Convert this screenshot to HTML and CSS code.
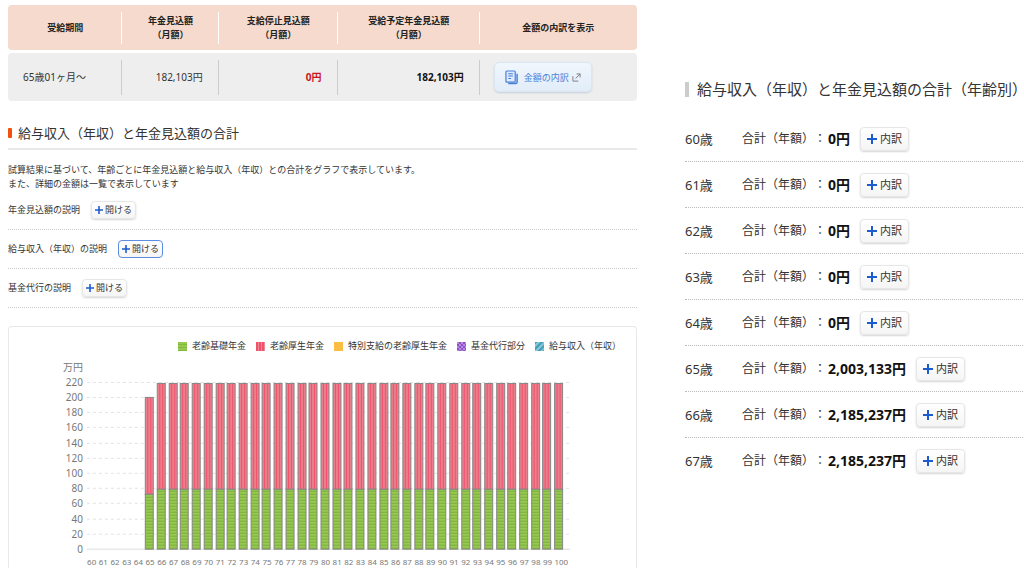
FILE: index.html
```
<!DOCTYPE html>
<html lang="ja">
<head>
<meta charset="utf-8">
<meta name="viewport" content="width=device-width, initial-scale=1">
<title>年金見込額</title>
<link rel="stylesheet" href="styles.css">
</head>
<body>
<svg class="defs" aria-hidden="true">
  <symbol id="plus" viewBox="0 0 10 10"><path d="M5 0V10M0 5H10" stroke="#1d5bd0" stroke-width="2" fill="none"/></symbol>
</svg>
<main class="page">
  <div class="main-column">
    <table class="summary">
      <colgroup><col class="col-period"><col class="col-amount"><col class="col-stop"><col class="col-plan"><col class="col-detail"></colgroup>
      <thead>
        <tr><th scope="col">受給期間</th><th scope="col">年金見込額<br>（月額）</th><th scope="col">支給停止見込額<br>（月額）</th><th scope="col">受給予定年金見込額<br>（月額）</th><th scope="col">金額の内訳を表示</th></tr>
      </thead>
      <tbody>
        <tr>
          <td class="period">65歳01ヶ月～</td><td>182,103円</td><td class="stopped">0円</td><td class="planned">182,103円</td>
          <td class="detail">
            <button type="button" class="detail-button">
              <svg class="doc-icon" viewBox="0 0 14 16" fill="none" stroke="#4a7fd8"><path d="M3.5 14.5H11.5Q13 14.5 13 13V4" stroke-width="1.6"/><rect x="1" y="1" width="10" height="12" rx="1" fill="#dfeafa" stroke-width="1.3"/><path d="M3.5 4H8.5M3.5 6.5H8.5M3.5 9H6.5" stroke-width="1.1"/></svg>
              <span>金額の内訳</span>
              <svg class="open-icon" viewBox="0 0 10 10" fill="none" stroke="#777"><path d="M1 3.5V9H7M4 6L9 1M5 1H9V5"/></svg>
            </button>
          </td>
        </tr>
      </tbody>
    </table>

    <h2 class="section-title">給与収入（年収）と年金見込額の合計</h2>
    <p class="lead">試算結果に基づいて、年齢ごとに年金見込額と給与収入（年収）との合計をグラフで表示しています。<br>また、詳細の金額は一覧で表示しています</p>

    <div class="notes">
      <div class="note"><span id="note1">年金見込額の説明</span><button type="button" class="button small" aria-describedby="note1"><svg><use href="#plus"/></svg>開ける</button></div>
      <div class="note"><span id="note2">給与収入（年収）の説明</span><button type="button" class="button small focused" aria-describedby="note2"><svg><use href="#plus"/></svg>開ける</button></div>
      <div class="note"><span id="note3">基金代行の説明</span><button type="button" class="button small" aria-describedby="note3"><svg><use href="#plus"/></svg>開ける</button></div>
    </div>

    <section class="chart-card">
      <ul class="legend">
        <li><i class="swatch basic"></i>老齢基礎年金</li>
        <li><i class="swatch welfare"></i>老齢厚生年金</li>
        <li><i class="swatch special"></i>特別支給の老齢厚生年金</li>
        <li><i class="swatch fund"></i>基金代行部分</li>
        <li><i class="swatch salary"></i>給与収入（年収）</li>
      </ul>
      <svg id="chart" class="chart" viewBox="0 0 628 212" role="img" aria-label="年齢ごとの合計">
        <defs>
          <pattern id="pink" width="1" height="1" patternContentUnits="userSpaceOnUse"><rect width="9" height="200" fill="#e97f8c"/><path d="M2.5 0V200M5.5 0V200" stroke="#f4506b"/></pattern>
          <pattern id="green" width="8" height="3" patternUnits="userSpaceOnUse"><rect width="8" height="3" fill="#97c850"/><rect width="8" height="1" fill="#7cae3c"/></pattern>
        </defs>
      </svg>
    </section>
  </div>

  <section class="age-column">
    <h2 class="age-title"><span>給与収入（年収）と年金見込額の合計（年齢別<span class="closing">）</span></span></h2>
    <ul class="ages">
      <li><span class="age">60歳</span><span class="total">合計（年額）：</span><strong>0円</strong><button type="button" class="button"><svg><use href="#plus"/></svg>内訳</button></li>
      <li><span class="age">61歳</span><span class="total">合計（年額）：</span><strong>0円</strong><button type="button" class="button"><svg><use href="#plus"/></svg>内訳</button></li>
      <li><span class="age">62歳</span><span class="total">合計（年額）：</span><strong>0円</strong><button type="button" class="button"><svg><use href="#plus"/></svg>内訳</button></li>
      <li><span class="age">63歳</span><span class="total">合計（年額）：</span><strong>0円</strong><button type="button" class="button"><svg><use href="#plus"/></svg>内訳</button></li>
      <li><span class="age">64歳</span><span class="total">合計（年額）：</span><strong>0円</strong><button type="button" class="button"><svg><use href="#plus"/></svg>内訳</button></li>
      <li><span class="age">65歳</span><span class="total">合計（年額）：</span><strong>2,003,133円</strong><button type="button" class="button"><svg><use href="#plus"/></svg>内訳</button></li>
      <li><span class="age">66歳</span><span class="total">合計（年額）：</span><strong>2,185,237円</strong><button type="button" class="button"><svg><use href="#plus"/></svg>内訳</button></li>
      <li><span class="age">67歳</span><span class="total">合計（年額）：</span><strong>2,185,237円</strong><button type="button" class="button"><svg><use href="#plus"/></svg>内訳</button></li>
    </ul>
  </section>
</main>
<script src="chart.js"></script>
</body>
</html>
```
FILE: styles.css
```
* { box-sizing: border-box; }
body {
  margin: 0;
  background: #fff;
  color: #333;
  font-family: "Noto Sans", "Noto Sans CJK JP", sans-serif;
  font-size: 9px;
  line-height: 14px;
}
h2, p, ul { margin: 0; padding: 0; }
ul { list-style: none; }
button { font-family: inherit; cursor: pointer; }
.defs { display: none; }

.page {
  display: grid;
  grid-template-columns: minmax(0, 629fr) minmax(0, 338fr);
  gap: 48px;
  align-items: start;
  padding: 2px 1px 0 8px;
}

/* Summary table */
.summary {
  width: 100%;
  table-layout: fixed;
  border-collapse: separate;
  border-spacing: 0 3px;
}
.col-period { width: 18.2%; }
.col-amount { width: 15.3%; }
.col-stop { width: 18.9%; }
.col-plan { width: 22.6%; }
.col-detail { width: 25%; }
.summary th, .summary td {
  padding: 0;
  background-repeat: no-repeat;
  background-position: right center;
}
.summary th {
  height: 45px;
  color: #222;
  font-weight: 700;
  background-color: #f5dacd;
  background-image: linear-gradient(#fff, #fff);
  background-size: 1px 32px;
}
.summary td {
  height: 48px;
  padding-right: 16px;
  font-size: 10px;
  text-align: right;
  background-color: #eee;
  background-image: linear-gradient(#ccc, #ccc);
  background-size: 1px 35px;
}
.summary th:last-child, .summary td:last-child { background-image: none; }
.summary th:first-child, .summary td:first-child { border-radius: 4px 0 0 4px; }
.summary th:last-child, .summary td:last-child { border-radius: 0 4px 4px 0; }
.summary .period { padding-left: 15px; text-align: left; }
.summary .stopped { color: #c9141e; font-weight: 700; }
.summary .planned { color: #111; font-weight: 700; }
.summary .detail { padding-left: 14px; text-align: left; }
.detail-button {
  display: inline-flex;
  align-items: center;
  height: 30px;
  padding: 0 10px;
  border: 1px solid #dce6f1;
  border-radius: 5px;
  background: linear-gradient(#f0f6fd, #e2edf9);
  box-shadow: 0 1px 2px #c5ced8;
  color: #4a7fd8;
  font-size: 9px;
  vertical-align: middle;
}
.doc-icon { width: 13px; height: 15px; margin-right: 6px; }
.open-icon { width: 9px; height: 9px; margin-left: 3px; }

/* Left column */
.section-title {
  display: flex;
  align-items: center;
  gap: 6px;
  margin-top: 18px;
  padding-bottom: 4px;
  border-bottom: 2px solid #e9e9e9;
  font-size: 13px;
  font-weight: 400;
  line-height: 22px;
}
.section-title::before {
  content: "";
  flex: none;
  width: 4px;
  height: 10px;
  border-radius: 1px;
  background: #f1500f;
}
.lead { margin: 13px 0 0; }
.note {
  display: flex;
  align-items: center;
  gap: 11px;
  height: 39px;
  border-bottom: 1px dotted #ccc;
}
.button {
  display: inline-flex;
  align-items: center;
  justify-content: center;
  gap: 3px;
  height: 24px;
  padding: 0 6px;
  border: 1px solid #e6e6e6;
  border-radius: 4px;
  background: linear-gradient(#fff, #f5f5f5);
  box-shadow: 0 1px 2px #d4d4d4;
  color: #333;
  font-size: 11px;
  line-height: 16px;
}
.button svg { width: 10px; height: 10px; }
.button.small { height: 18px; padding: 0 3px; gap: 2px; font-size: 9px; }
.button.small svg { width: 8px; height: 8px; }
.button.focused { border-color: #5b8de0; box-shadow: none; }

/* Chart */
.chart-card {
  margin-top: 18px;
  border: 1px solid #e8e8e8;
  border-bottom: 0;
  border-radius: 4px 4px 0 0;
}
.legend {
  display: flex;
  flex-wrap: wrap;
  justify-content: flex-end;
  gap: 10px;
  padding: 12px 15px 3px;
}
.legend li { display: flex; align-items: center; gap: 5px; }
.swatch { width: 9px; height: 9px; }
.basic { background: repeating-linear-gradient(#97c850 0 2px, #83b83f 2px 3px); }
.welfare { background: repeating-linear-gradient(90deg, #f4506b 0 2px, #e98b95 2px 3px); }
.special { background: #fcbd45; }
.fund { background: repeating-conic-gradient(#8f4fcb 0 25%, #b88ae2 0 50%) 0 0 / 4px 4px; }
.salary { background: repeating-linear-gradient(135deg, #45a2bd 0 2px, #86c4d4 2px 4px); }
.chart { display: block; width: 100%; }
.chart text { fill: #777; font-size: 10px; }
.chart .age-label { font-size: 8px; text-anchor: middle; }
.chart .value-label { text-anchor: end; }
.grid-line { stroke: #e2e2e2; stroke-dasharray: 3 3; }
.base-line { stroke: #ddd; }
.bar { stroke: #858585; }

/* Right column */
.age-column { padding-top: 75px; }
.age-title {
  display: flex;
  align-items: center;
  gap: 8px;
  font-size: 15px;
  font-weight: 400;
  line-height: 24px;
  white-space: nowrap;
}
.age-title::before { content: ""; flex: none; width: 4px; height: 15px; background: #ccc; }
.closing { font-feature-settings: "halt"; }
.ages { margin-top: 15px; }
.ages li {
  display: flex;
  align-items: center;
  height: 46px;
  border-bottom: 1px dotted #bbb;
}
.ages li:last-child { border-bottom: 0; }
.age { width: 57px; font-size: 13px; }
.total { font-size: 12px; text-spacing-trim: space-all; }
.ages strong { margin: 0 10px 0 2px; color: #111; font-size: 14px; }
```
FILE: chart.js
```
const chart = document.getElementById("chart");
const BASE = 194;
const STEP = 15.2;

function add(name, attributes, text) {
  const node = document.createElementNS("http://www.w3.org/2000/svg", name);
  for (const key in attributes) node.setAttribute(key, attributes[key]);
  if (text !== undefined) node.textContent = text;
  chart.appendChild(node);
}

add("text", { x: 74, y: 15, class: "value-label" }, "万円");
for (let i = 0; i <= 11; i++) {
  const y = Math.round(BASE - i * STEP) - 0.5;
  add("line", { x1: 78, x2: 562, y1: y, y2: y, class: i ? "grid-line" : "base-line" });
  add("text", { x: 74, y: y + 4, class: "value-label" }, i * 20);
}

for (let age = 60; age <= 100; age++) {
  const center = 82.8 + (age - 60) * 11.71;
  add("text", { x: age === 100 ? center + 2 : center, y: 209, class: "age-label" }, age);
  if (age < 65) continue;
  const x = Math.round(center - 4) - 0.5;
  const top = age === 65 ? 41.5 : 27.5;
  const split = age === 65 ? 138.5 : 133.5;
  add("rect", { x, y: top, width: 8, height: split - top, fill: "url(#pink)", class: "bar" });
  add("rect", { x, y: split, width: 8, height: 193.5 - split, fill: "url(#green)", class: "bar" });
}
```
